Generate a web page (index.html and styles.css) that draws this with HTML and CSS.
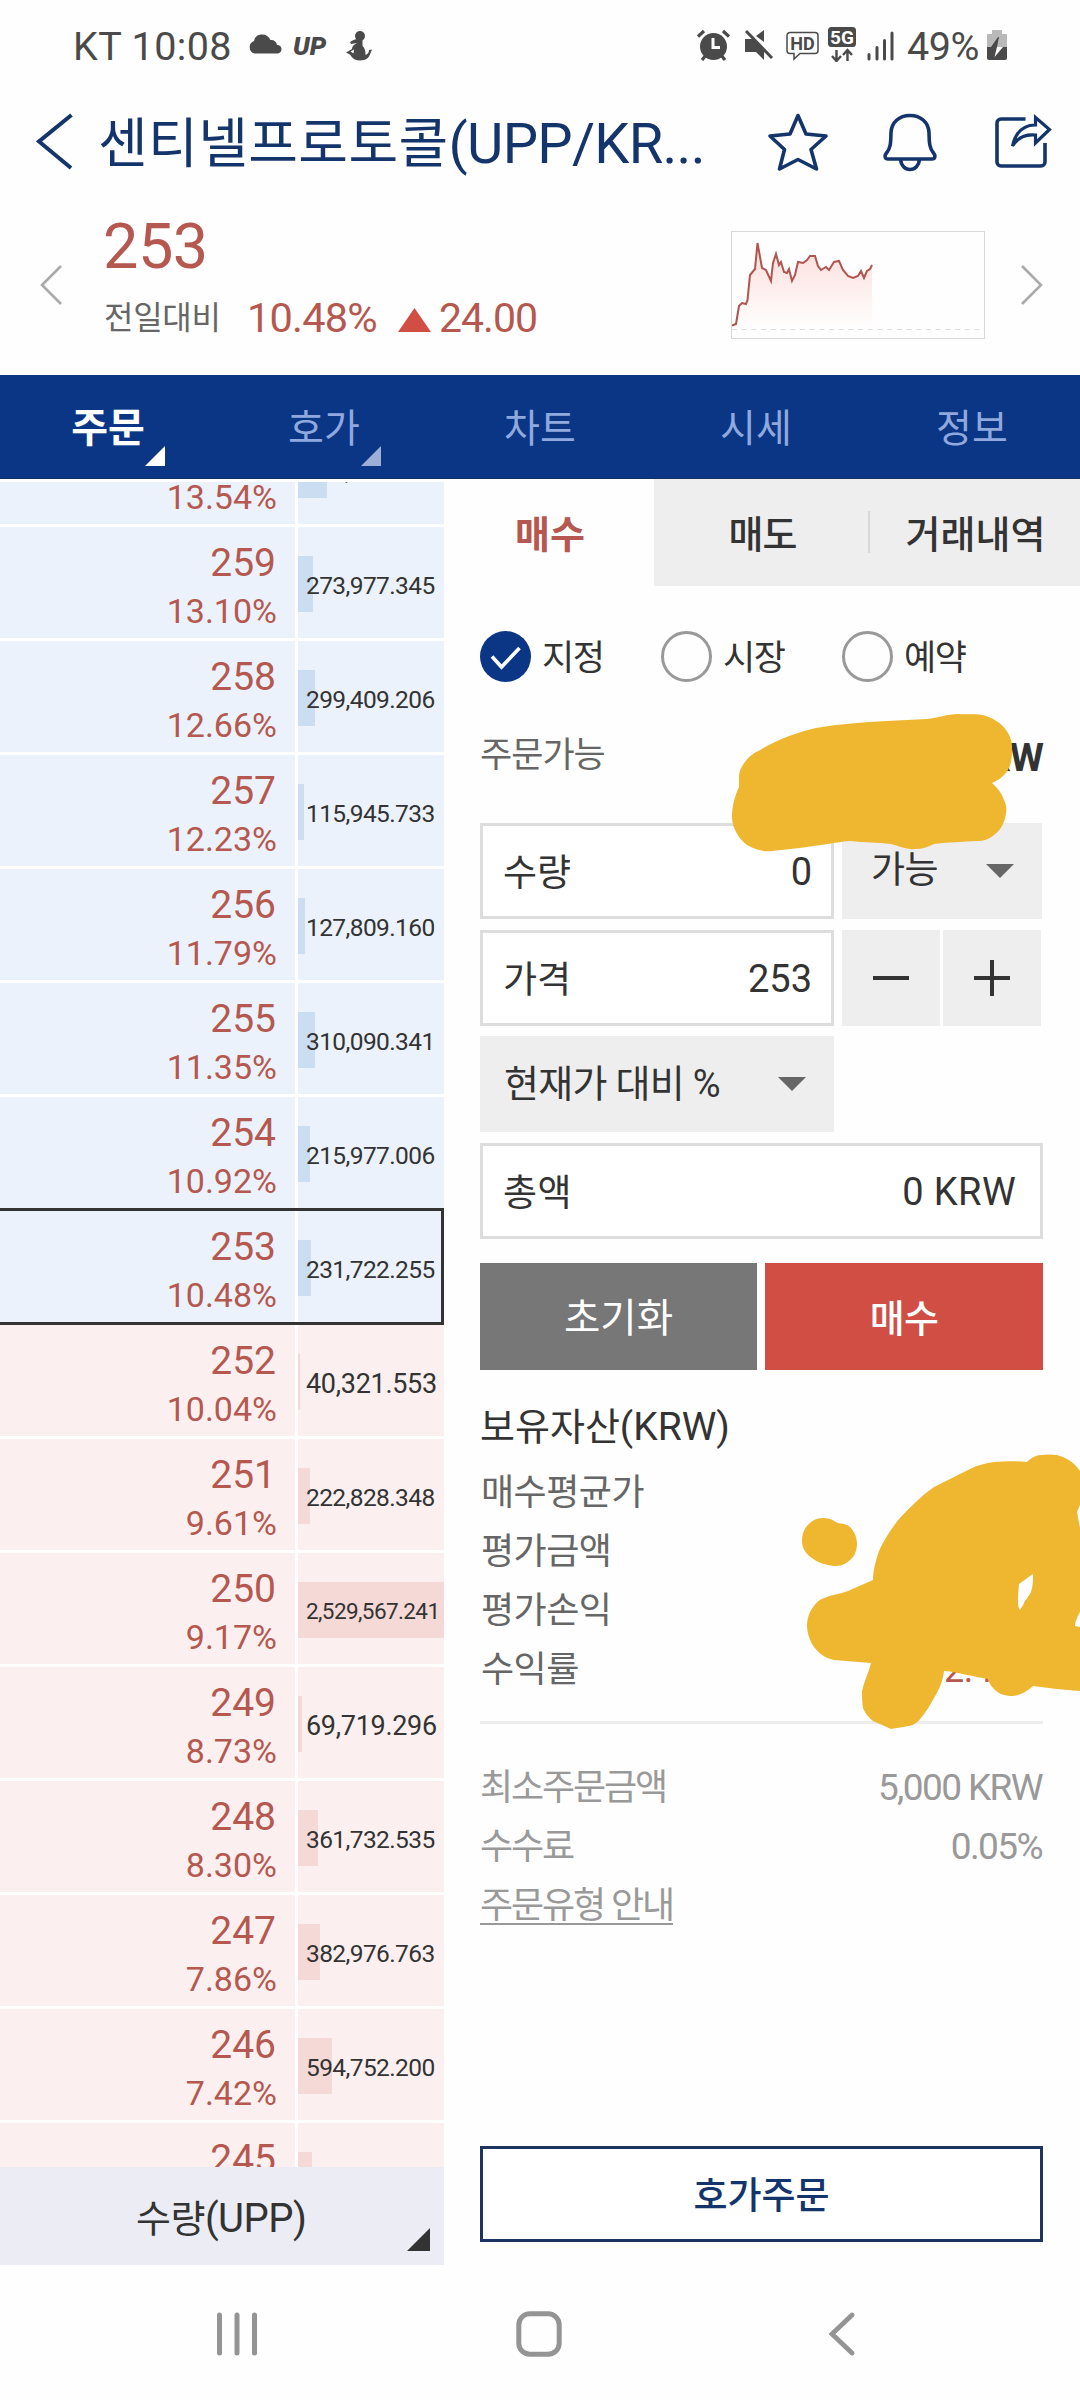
FILE: index.html
```html
<!DOCTYPE html>
<html lang="ko">
<head>
<meta charset="utf-8">
<title>UPP/KRW</title>
<link rel="stylesheet" href="styles.css">
</head>
<body>
<div class="phone">
  <header class="status">
    <span class="status-clock">KT 10:08</span>
    <svg class="ic-cloud" width="34" height="20" viewBox="0 0 34 20"><path d="M7 19.500a6.500 6.500 0 0 1-1-12.500C7 2.500 10 .5 14 .5c4 0 7 2 8.500 5.500 4 0 6 2 6.500 5 3 0 4.500 2 4.500 4.200 0 2.600-1.800 4.300-4.500 4.300z" fill="#4a4a4a"/></svg>
    <span class="status-up">UP</span>
    <svg class="ic-mermaid" width="26" height="30" viewBox="0 0 26 30" fill="#4a4a4a"><circle cx="14" cy="5" r="5"/><path d="M12 8c-3 0-6 1.500-8 3l1 2 6-1c-2 1-5 3-5 6-2 1-4 2.500-6 3.500 2 1 4 1.500 5 3.500 2 3 5 4.500 9 4.500 6 0 9-3 10-6l2-5-3 .5c0 3-1.500 4-3.500 5 0-5-1-7-3-9V8z"/><path d="M4.500 20.500 8 18.500l-.5 4z" fill="#fff"/></svg>
    <svg class="ic-alarm" width="33" height="32" viewBox="0 0 33 32"><circle cx="16.500" cy="17.500" r="13.500" fill="#4a4a4a"/><path d="M1 7.500 7 2M32 7.500 26 2M5 31l4-5M28 31l-4-5" stroke="#4a4a4a" stroke-width="3.200"/><path d="M16 9v9.500h7" stroke="#fff" stroke-width="3" fill="none"/></svg>
    <svg class="ic-mute" width="30" height="32" viewBox="0 0 30 32"><path d="M1 10h8l11 10v11l-8-8H1zM12 7l8-6v12z" fill="#4a4a4a"/><path d="M2 2l26 27" stroke="#4a4a4a" stroke-width="3"/></svg>
    <svg class="ic-hd" width="33" height="30" viewBox="0 0 33 30"><path d="M4 1.500h25a3 3 0 0 1 3 3v15a3 3 0 0 1-3 3H14l-6 5.500v-5.500H4a3 3 0 0 1-3-3v-15a3 3 0 0 1 3-3z" fill="none" stroke="#4a4a4a" stroke-width="1.500"/><text x="16.500" y="18.500" text-anchor="middle" class="hd-text">HD</text></svg>
    <svg class="ic-5g" width="30" height="36" viewBox="0 0 30 36"><rect x="1" y="1" width="28" height="20" rx="3.500" fill="#4a4a4a"/><text x="15" y="17.800" text-anchor="middle" class="g5-text">5G</text><path d="M9.500 24v11M5 30l4.500 5 4.500-5M20.500 35V24M16 29l4.500-5 4.500 5" stroke="#4a4a4a" stroke-width="2.400" fill="none"/></svg>
    <svg class="ic-signal" width="28" height="30" viewBox="0 0 28 30"><path d="M2 23.500v4.500M10 16.500v11.500M17.500 9.500V28M25 2v26" stroke="#4a4a4a" stroke-width="3" stroke-linecap="round"/></svg>
    <span class="status-batt">49%</span>
    <svg class="ic-battery" width="22" height="32" viewBox="0 0 22 32"><path d="M6 1h10v4h5v13H1V5h5z" fill="#b9b9b9"/><path d="M1 18h20v11a2 2 0 0 1-2 2H3a2 2 0 0 1-2-2z" fill="#4a4a4a"/><path d="M12 8 5 18h6l2-10z" fill="#4a4a4a"/><path d="M11 18h6L8.500 28z" fill="#fff"/></svg>
  </header>

  <div class="titlebar">
    <svg class="ic-back" width="38" height="58" viewBox="0 0 38 58"><path d="M35.500 3 3 29.500 35 56" fill="none" stroke="#14346c" stroke-width="4"/></svg>
    <h1 class="title">센티넬프로토콜<span class="title-latin">(UPP/KR...</span></h1>
    <svg class="ic-star" width="62" height="60" viewBox="0 0 62 60"><path d="M31 3.500 39 22 59 24 44 37.500 49.500 57 31 47.500 12.500 57 17.500 37.500 3 24 23 22z" fill="none" stroke="#14346c" stroke-width="3.600" stroke-linejoin="round"/></svg>
    <svg class="ic-bell" width="56" height="60" viewBox="0 0 56 60"><path d="M28 3.500c11 0 18.500 7 19 17 .3 8-.2 15 4.500 20.500 2.500 3 1.500 6-1.500 6H6c-3 0-4-3-1.500-6C9.200 35.500 8.700 28.500 9 20.500c.5-10 8-17 19-17zM18.500 47.500c.5 6 4.500 10 9.500 10s9-4 9.500-10" fill="none" stroke="#14346c" stroke-width="3.600"/></svg>
    <svg class="ic-share" width="58" height="56" viewBox="0 0 58 56"><path d="M31.500 7H7a4 4 0 0 0-4 4v39a4 4 0 0 0 4 4h40a4 4 0 0 0 4-4V31" fill="none" stroke="#14346c" stroke-width="3.600"/><path d="M41.500 5.500 55.500 17.500 41.500 31v-8c-10-1-18 3-23 11 3-13 10-21 23-21z" fill="none" stroke="#14346c" stroke-width="3.200"/></svg>
  </div>

  <section class="summary">
    <svg class="ic-prev" width="22" height="40" viewBox="0 0 22 40"><path d="M21 1 2 20l19 19" fill="none" stroke="#aaa" stroke-width="2.600"/></svg>
    <div class="quote">
      <div class="quote-price">253</div>
      <div class="quote-change">
        <span class="quote-label">전일대비</span>
        <span class="quote-rate">10.48%</span>
        <span class="tri-up"></span>
        <span class="quote-diff">24.00</span>
      </div>
    </div>
    <svg class="spark" width="254" height="108" viewBox="0 0 254 108">
      <defs><linearGradient id="fade" x1="0" y1="0" x2="0" y2="1"><stop offset="0" stop-color="#fbdcda"/><stop offset="1" stop-color="#fff"/></linearGradient></defs>
      <path d="M1 94.500 5 93 8 75 11 72 15 73 16.500 69 19 44 24 38 26.500 12 31 37 35 39 40 50 42 32 45 23 48 34 50 31 53 41 56 42 58 38 61 50 64 44 67 31 72 32 76 29 79 25 84 25 87 35 90 39 95 36 98 39 103 31 108 30 112 39 117 45 122 47 127 45 130 40 133 47 136 40 139 38 141 34V99H1z" fill="url(#fade)"/>
      <path d="M1 94.500 5 93 8 75 11 72 15 73 16.500 69 19 44 24 38 26.500 12 31 37 35 39 40 50 42 32 45 23 48 34 50 31 53 41 56 42 58 38 61 50 64 44 67 31 72 32 76 29 79 25 84 25 87 35 90 39 95 36 98 39 103 31 108 30 112 39 117 45 122 47 127 45 130 40 133 47 136 40 139 38 141 34" fill="none" stroke="#b1544d" stroke-width="2"/>
      <path d="M1 98.500h252" stroke="#ddd" stroke-dasharray="5 4.700"/>
      <rect x=".5" y=".5" width="253" height="107" fill="none" stroke="#d8d8d8"/>
    </svg>
    <svg class="ic-next" width="22" height="40" viewBox="0 0 22 40"><path d="M1 1l19 19L1 39" fill="none" stroke="#aaa" stroke-width="2.600"/></svg>
  </section>

  <nav class="nav">
    <a class="nav-item active fold">주문</a>
    <a class="nav-item fold">호가</a>
    <a class="nav-item">차트</a>
    <a class="nav-item">시세</a>
    <a class="nav-item">정보</a>
  </nav>

  <main class="main">
    <aside class="side">
      <div class="book">
        <div class="rows">
          <div class="row ask"><div class="cell"><div class="price"></div><div class="pct">13.54%</div></div><div class="vol cut"><i style="width:29px"></i><b>,</b></div></div>
          <div class="row ask"><div class="cell"><div class="price">259</div><div class="pct">13.10%</div></div><div class="vol"><i style="width:15px"></i><b>273,977.345</b></div></div>
          <div class="row ask"><div class="cell"><div class="price">258</div><div class="pct">12.66%</div></div><div class="vol"><i style="width:17px"></i><b>299,409.206</b></div></div>
          <div class="row ask"><div class="cell"><div class="price">257</div><div class="pct">12.23%</div></div><div class="vol"><i style="width:6px"></i><b>115,945.733</b></div></div>
          <div class="row ask"><div class="cell"><div class="price">256</div><div class="pct">11.79%</div></div><div class="vol"><i style="width:7px"></i><b>127,809.160</b></div></div>
          <div class="row ask"><div class="cell"><div class="price">255</div><div class="pct">11.35%</div></div><div class="vol"><i style="width:17px"></i><b>310,090.341</b></div></div>
          <div class="row ask"><div class="cell"><div class="price">254</div><div class="pct">10.92%</div></div><div class="vol"><i style="width:12px"></i><b>215,977.006</b></div></div>
          <div class="row ask current"><div class="cell"><div class="price">253</div><div class="pct">10.48%</div></div><div class="vol"><i style="width:13px"></i><b>231,722.255</b></div></div>
          <div class="row bid"><div class="cell"><div class="price">252</div><div class="pct">10.04%</div></div><div class="vol large"><i style="width:2px"></i><b>40,321.553</b></div></div>
          <div class="row bid"><div class="cell"><div class="price">251</div><div class="pct">9.61%</div></div><div class="vol"><i style="width:12px"></i><b>222,828.348</b></div></div>
          <div class="row bid"><div class="cell"><div class="price">250</div><div class="pct">9.17%</div></div><div class="vol small"><i style="width:146px"></i><b>2,529,567.241</b></div></div>
          <div class="row bid"><div class="cell"><div class="price">249</div><div class="pct">8.73%</div></div><div class="vol large"><i style="width:4px"></i><b>69,719.296</b></div></div>
          <div class="row bid"><div class="cell"><div class="price">248</div><div class="pct">8.30%</div></div><div class="vol"><i style="width:20px"></i><b>361,732.535</b></div></div>
          <div class="row bid"><div class="cell"><div class="price">247</div><div class="pct">7.86%</div></div><div class="vol"><i style="width:22px"></i><b>382,976.763</b></div></div>
          <div class="row bid"><div class="cell"><div class="price">246</div><div class="pct">7.42%</div></div><div class="vol"><i style="width:34px"></i><b>594,752.200</b></div></div>
          <div class="row bid"><div class="cell"><div class="price">245</div><div class="pct"></div></div><div class="vol"><i style="width:14px"></i><b></b></div></div>
        </div>
      </div>
      <div class="unit">수량<span class="unit-latin">(UPP)</span></div>
    </aside>

    <section class="order">
      <div class="tabs">
        <div class="tab tab-buy">매수</div>
        <div class="tab tab-sell">매도</div>
        <div class="tab tab-history">거래내역</div>
      </div>
      <div class="form">
        <div class="radios">
          <div class="radio"><svg width="51" height="51" viewBox="0 0 51 51"><circle cx="25.500" cy="25.500" r="25.500" fill="#0a3685"/><path d="M12 25.500l9.500 10.500L39.500 17" fill="none" stroke="#fff" stroke-width="3.600"/></svg>지정</div>
          <div class="radio"><span class="ring"></span>시장</div>
          <div class="radio"><span class="ring"></span>예약</div>
        </div>
        <div class="avail"><span>주문가능</span><b>KRW</b></div>
        <div class="line">
          <div class="field"><span>수량</span><span>0</span></div>
          <div class="select select-avail"><span>가능</span><span class="tri-down"></span></div>
        </div>
        <div class="line">
          <div class="field"><span>가격</span><span>253</span></div>
          <div class="step"><svg width="38" height="38" viewBox="0 0 38 38"><path d="M1 19h36" stroke="#333" stroke-width="4"/></svg></div>
          <div class="step"><svg width="38" height="38" viewBox="0 0 38 38"><path d="M1 19h36M19 1v36" stroke="#333" stroke-width="4"/></svg></div>
        </div>
        <div class="select select-pct"><span>현재가 대비 %</span><span class="tri-down"></span></div>
        <div class="field total"><span>총액</span><span>0 KRW</span></div>
        <div class="actions"><div class="btn btn-reset">초기화</div><div class="btn btn-buy">매수</div></div>
        <h2 class="assets-title">보유자산<span class="assets-latin">(KRW)</span></h2>
        <dl class="assets">
          <dt>매수평균가</dt><dd></dd>
          <dt>평가금액</dt><dd></dd>
          <dt>평가손익</dt><dd class="gain">3</dd>
          <dt>수익률</dt><dd class="yield">2.4</dd>
        </dl>
        <dl class="notes">
          <dt>최소주문금액</dt><dd>5,000 KRW</dd>
          <dt>수수료</dt><dd>0.05%</dd>
          <dt><a class="guide">주문유형 안내</a></dt><dd></dd>
        </dl>
        <div class="quick">호가주문</div>
      </div>
    </section>
  </main>

  <footer class="sysnav">
    <svg width="42" height="46" viewBox="0 0 42 46"><path d="M3.500 4v38M21 4v38M38.500 4v38" stroke="#949494" stroke-width="5" stroke-linecap="round"/></svg>
    <svg width="46" height="46" viewBox="0 0 46 46"><rect x="2.800" y="2.800" width="40.400" height="40.400" rx="11" fill="none" stroke="#949494" stroke-width="5"/></svg>
    <svg width="28" height="46" viewBox="0 0 28 46"><path d="M25 4 5 23l20 19" fill="none" stroke="#949494" stroke-width="4.800" stroke-linecap="round"/></svg>
  </footer>

  <!-- Marker strokes that hide the account figures -->
  <svg class="marker" width="1080" height="2400" viewBox="0 0 1080 2400" fill="#efb730">
    <path d="M739 778C739 771 741 767 745 762 749 756 754 753 760 750 778 739 796 733 816 728 840 724 863 722 887 721 900 720 914 720 927 719 938 718 947 714 958 714 968 715 977 713 986 716 995 719 1002 724 1006 730 1010 735 1012 741 1012 747 1012 755 1012 763 1008 770 1004 776 999 780 992 783 998 788 1002 794 1004 800 1006 804 1007 809 1006 813 1005 822 1001 830 994 835 989 839 984 841 978 841 963 842 949 842 934 844 928 847 922 849 915 849 907 850 899 846 891 844 878 842 864 843 851 841 843 841 836 843 828 844 809 847 790 849 772 851 764 852 756 850 749 846 742 842 738 836 735 830 733 826 732 821 732 817 732 807 734 798 739 787z"/>
    <path d="M802 1541C802 1533 805 1527 810 1523 814 1519 819 1518 824 1518 830 1518 834 1521 838 1523 842 1524 847 1524 850 1527 855 1532 857 1538 857 1544 857 1551 854 1557 850 1560 845 1565 840 1566 834 1566 826 1565 818 1563 812 1558 806 1554 802 1548 802 1541z"/>
    <path fill-rule="evenodd" d="M873 1580C873 1570 876 1560 879 1551 884 1540 891 1529 899 1519 910 1507 921 1496 934 1487 946 1481 958 1475 970 1469 978 1465 986 1463 994 1462 1005 1461 1016 1461 1027 1462 1031 1458 1036 1455 1041 1455 1049 1454 1057 1454 1063 1457 1070 1460 1075 1464 1080 1471V1505L1077 1512 1080 1528V1612C1078 1616 1075 1621 1075 1626L1080 1627V1691C1064 1690 1049 1688 1033 1686 1026 1692 1019 1696 1012 1696 1005 1696 999 1694 994 1689 991 1686 989 1683 988 1679 973 1677 959 1672 944 1671 943 1681 939 1690 934 1698 930 1705 926 1712 921 1718 918 1722 914 1725 909 1726L891 1729 873 1721C868 1717 865 1713 863 1708 862 1703 862 1697 862 1691 864 1681 869 1672 871 1663L834 1660C824 1658 817 1652 812 1644 809 1638 807 1632 807 1626 807 1621 808 1616 810 1612 814 1605 818 1600 824 1598 831 1595 840 1594 848 1591zM1019 1584 1033 1574C1033 1580 1033 1586 1031 1592L1020 1610C1017 1607 1018 1595 1019 1584z"/>
  </svg>
</div>
</body>
</html>
```
FILE: styles.css
```css
* { box-sizing: border-box; }
body { margin: 0; background: #fefefe; }
h1, h2, dl, dd { margin: 0; font-weight: 400; }
svg { display: block; flex: none; }

.phone {
  position: relative;
  width: 1080px;
  height: 2400px;
  overflow: hidden;
  display: flex;
  flex-direction: column;
  font-family: Roboto, "Noto Sans CJK KR", sans-serif;
  color: #333;
  white-space: nowrap;
}

/* status bar */
.status { height: 92px; display: flex; padding: 0 72px 0 73px; color: #4a4a4a; }
.status-clock { width: 175px; font-size: 39.500px; line-height: 94px; letter-spacing: 0.4px; }
.ic-cloud { margin-top: 34px; }
.status-up { margin: 32px 0 0 11px; width: 42px; font-size: 26px; line-height: 28px; font-weight: 900; font-style: italic; }
.ic-mermaid { margin: 31px 0 0 11px; }
.ic-alarm { margin: 29px 0 0 auto; }
.ic-mute { margin: 29px 0 0 14px; }
.ic-hd { margin: 31px 0 0 12px; }
.ic-5g { margin: 26px 0 0 8px; }
.ic-signal { margin: 31px 0 0 10px; }
.status-batt { width: 84px; padding-left: 12px; font-size: 39.500px; line-height: 94px; letter-spacing: -0.5px; }
.ic-battery { margin-top: 29px; margin-left: 7px; }
.hd-text { font: 700 18px Roboto, sans-serif; fill: #4a4a4a; }
.g5-text { font: 700 19px Roboto, sans-serif; fill: #fff; }

/* title bar */
.titlebar { height: 124px; display: flex; padding-left: 36px; color: #14346c; }
.ic-back { margin-top: 20px; }
.title { width: 666px; padding-left: 24px; font-size: 54px; line-height: 104px; letter-spacing: 0.4px; }
.title-latin { font-size: 56px; letter-spacing: -0.7px; }
.ic-star { margin: 20px 0 0 27px; }
.ic-bell { margin: 20px 0 0 53px; }
.ic-share { margin: 20px 0 0 56px; }

/* price summary */
.summary { height: 159px; display: flex; color: #b5584f; }
.ic-prev { margin: 49px 0 0 40px; }
.quote { width: 627px; padding-left: 41px; }
.quote-price { height: 60px; font-size: 63px; line-height: 61px; letter-spacing: -0.5px; }
.quote-change { display: flex; align-items: center; height: 84px; line-height: 84px; }
.quote-label { width: 144px; padding-left: 1px; font-size: 32px; letter-spacing: -0.3px; color: #666; }
.quote-rate { width: 151px; font-size: 41.500px; letter-spacing: -0.8px; }
.tri-up { width: 33px; height: 24px; margin-top: 4px; background: #d14e44; clip-path: polygon(50% 0, 100% 100%, 0 100%); }
.quote-diff { margin-left: 8px; font-size: 41px; letter-spacing: -1px; }
.spark { margin: 15px 0 0 42px; }
.ic-next { margin: 49px 0 0 36px; }

/* main navigation */
.nav { height: 104px; display: flex; background: #0a3685; border-bottom: 1px solid #14305f; }
.nav-item { position: relative; width: 216px; text-align: center; font-size: 39px; line-height: 108px; color: #8fa9de; }
.nav-item.active { color: #fff; font-weight: 700; font-size: 40px; }
.fold::after { content: ""; position: absolute; left: 145px; top: 71px; width: 20px; height: 20px; background: #9dafd6; clip-path: polygon(100% 0, 100% 100%, 0 100%); }
.fold.active::after { background: #fff; }

.main { height: 1786px; display: flex; }

/* order book */
.side { width: 444px; padding-top: 3px; }
.book { height: 1685px; overflow: hidden; background: #fff; }
.rows { display: flex; flex-direction: column; gap: 3px; margin-top: -69px; }
.row { position: relative; height: 111px; flex: none; display: grid; grid-template: 111px / 295px 146px; gap: 3px; }
.ask > div { background: #ebf2fb; }
.bid > div { background: #fbf0ef; }
.cell { padding: 13px 18px 0 0; text-align: right; color: #b5584f; }
.price { height: 46px; padding-right: 1px; font-size: 39px; line-height: 46px; }
.pct { font-size: 34px; line-height: 51px; }
.vol { position: relative; padding: 8px 0 0 8px; }
.vol b { position: relative; display: block; font-weight: 400; font-size: 24.5px; line-height: 101px; letter-spacing: -0.6px; }
.vol i { position: absolute; left: 0; top: 29px; height: 56px; }
.vol.large b { font-size: 27px; line-height: 103px; letter-spacing: -0.3px; }
.vol.small b { font-size: 22.500px; letter-spacing: -0.6px; }
.vol.cut { padding-left: 47px; }
.ask i { background: #cbddf0; }
.bid i { background: #f4d9d6; }
.current::after { content: ""; position: absolute; inset: -3px 0 -3px 0; border: solid #333; border-width: 3px 3px 3px 0; }
.unit { position: relative; height: 98px; padding-left: 136px; background: #ecedf4; font-size: 38px; line-height: 104px; letter-spacing: -0.5px; }
.unit-latin { font-size: 40px; }
.unit::after { content: ""; position: absolute; right: 14px; bottom: 14px; width: 23px; height: 23px; background: #333; clip-path: polygon(100% 0, 100% 100%, 0 100%); }

/* order form */
.order { flex: 1; }
.tabs { height: 107px; display: flex; margin-left: 10px; font-size: 38px; line-height: 112px; text-align: center; }
.tab-buy { width: 200px; padding-right: 8px; color: #b5584f; font-weight: 700; }
.tab-sell { width: 214px; padding-left: 3px; background: #eee; font-weight: 500; letter-spacing: -1px; }
.tab-history { flex: 1; background: linear-gradient(#d9d9d9, #d9d9d9) 0 32px / 2px 42px no-repeat #eee; font-weight: 500; padding-left: 3px; }
.form { padding: 45px 37px 0 36px; font-size: 38px; }
.radios { height: 51px; display: flex; font-size: 35px; line-height: 56px; letter-spacing: -1.500px; }
.radio { width: 181px; display: flex; gap: 11px; }
.ring { width: 51px; height: 51px; border: 3px solid #999; border-radius: 50%; }
.avail { height: 141px; display: flex; justify-content: space-between; font-size: 35px; line-height: 147px; letter-spacing: -1px; color: #666; }
.avail b { font-size: 39px; color: #333; line-height: 152px; }
.line { display: flex; height: 96px; margin-bottom: 11px; }
.field { width: 354px; height: 96px; display: flex; justify-content: space-between; padding: 0 19px 0 20px; border: 3px solid #ddd; background: #fff; line-height: 93px; }
.field span:first-child { font-size: 37px; line-height: 95px; }
.select { height: 96px; display: flex; align-items: center; justify-content: space-between; background: #eee; line-height: 98px; }
.select-avail { width: 200px; margin-left: 8px; padding: 0 28px 0 29px; font-size: 37px; letter-spacing: -0.5px; }
.select-pct { width: 354px; margin-top: -1px; padding: 0 28px 0 24px; letter-spacing: -0.7px; }
.tri-down { width: 28px; height: 14px; background: #666; clip-path: polygon(0 0, 100% 0, 50% 100%); }
.step { width: 98px; margin-left: 8px; display: flex; align-items: center; justify-content: center; background: #eee; }
.step + .step { margin-left: 3px; }
.total { width: 563px; margin-top: 11px; padding-right: 24px; letter-spacing: 0.4px; }
.actions { display: flex; gap: 8px; margin-top: 24px; }
.btn { height: 107px; width: 277px; text-align: center; color: #fff; line-height: 112px; font-size: 39.500px; }
.btn-reset { background: #777; }
.btn-buy { width: 278px; background: #d14e44; font-weight: 500; font-size: 38px; letter-spacing: -0.7px; }
.assets-title { height: 93px; font-size: 38px; line-height: 115px; letter-spacing: 0; }
.assets-latin { font-size: 39px; }
.assets, .notes { display: grid; grid-template-columns: 300px 1fr; grid-auto-rows: 59px; line-height: 61px; font-size: 36px; color: #666; letter-spacing: -0.500px; }
.assets { height: 261px; border-bottom: 3px solid #ececec; padding-left: 1px; }
.assets dd, .notes dd { text-align: right; }
.assets dd { color: #b5584f; }
.assets .gain { padding-right: 1px; line-height: 63px; }
.assets .yield { text-align: left; padding-left: 163px; }
.notes { margin-top: 34px; color: #999; letter-spacing: -2.100px; }
.notes dd { font-size: 37px; line-height: 60px; letter-spacing: -1.600px; padding-right: 1px; }
.guide { text-decoration: underline; text-decoration-thickness: 2px; text-underline-offset: 5px; }
.quick { height: 96px; margin-top: 211px; border: 3px solid #1b3560; background: #fff; color: #14346c; text-align: center; font-size: 37px; line-height: 95px; font-weight: 500; }

/* system navigation */
.sysnav { flex: 1; display: flex; padding: 46px 0 0 216px; }
.sysnav svg:nth-child(2) { margin-left: 258px; }
.sysnav svg:nth-child(3) { margin-left: 265px; }

.marker { position: absolute; left: 0; top: 0; }
```
